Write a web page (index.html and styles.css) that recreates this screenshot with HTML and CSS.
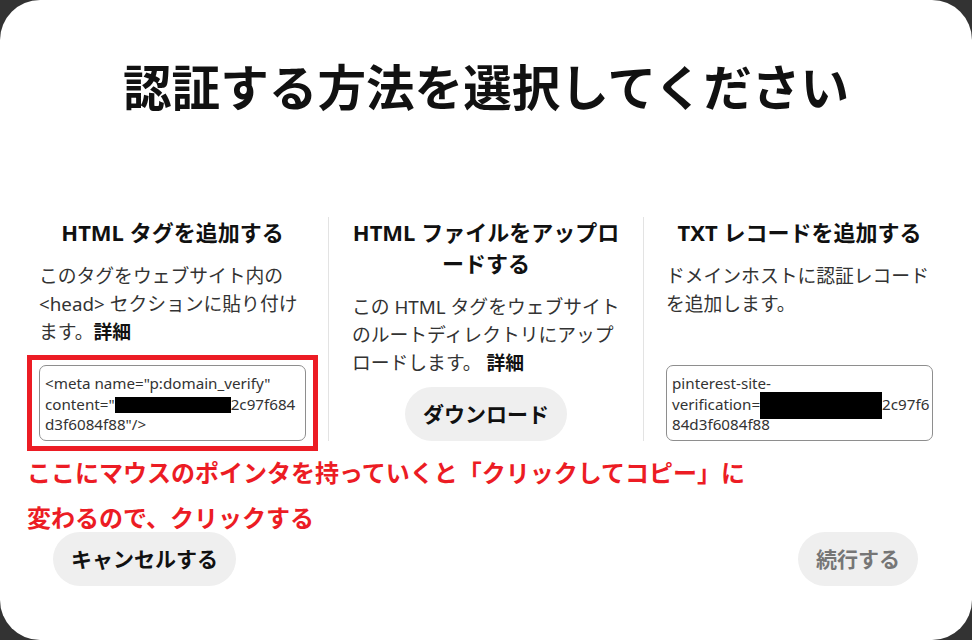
FILE: index.html
```html
<!DOCTYPE html>
<html lang="ja">
<head>
<meta charset="utf-8">
<title>認証する方法を選択してください</title>
<link rel="stylesheet" href="styles.css">
</head>
<body>
<div class="modal">
  <h1 class="title">認証する方法を選択してください</h1>
  <div class="methods">
    <section class="method m1">
      <h2 class="method-title">HTML タグを追加する</h2>
      <p class="method-desc">このタグをウェブサイト内の &lt;head&gt; セクションに貼り付けます。<b>詳細</b></p>
      <div class="code code1">&lt;meta name="p:domain_verify"<br>content="<span class="redact r1"></span>2c97f684<br>d3f6084f88"/&gt;</div>
    </section>
    <section class="method m2">
      <h2 class="method-title">HTML ファイルをアップロードする</h2>
      <p class="method-desc">この HTML タグをウェブサイトのルートディレクトリにアップロードします。 <b>詳細</b></p>
      <div class="action"><button class="btn">ダウンロード</button></div>
    </section>
    <section class="method m3">
      <h2 class="method-title">TXT レコードを追加する</h2>
      <p class="method-desc">ドメインホストに認証レコードを追加します。</p>
      <div class="code code3">pinterest-site-<br>verification=<span class="redact r3"></span>2c97f6<br>84d3f6084f88</div>
    </section>
  </div>
  <div class="footer">
    <button class="btn">キャンセルする</button>
    <button class="btn btn-disabled">続行する</button>
  </div>
  <div class="note-box"></div>
  <p class="note">ここにマウスのポインタを持っていくと「クリックしてコピー」に<br>変わるので、クリックする</p>
</div>
</body>
</html>
```

FILE: styles.css
```css
html, body {
  margin: 0;
  padding: 0;
  background: #333333;
}
body {
  font-family: "Noto Sans", "Noto Sans CJK JP", sans-serif;
  color: #111111;
}
.modal {
  position: relative;
  width: 972px;
  height: 640px;
  background: #ffffff;
  border-radius: 40px;
  display: flex;
  flex-direction: column;
  overflow: hidden;
}
.title {
  margin: 57px 0 0;
  font-size: 48.6px;
  line-height: 60px;
  font-weight: 700;
  text-align: center;
  color: #111111;
}
.methods {
  margin-top: 100px;
  padding-left: 17px;
  display: grid;
  grid-template-columns: 311px 315px 312px;
}
.method {
  display: flex;
  flex-direction: column;
  padding: 0 22px;
}
.m2 {
  border-left: 1px solid #e3e3e3;
  padding: 0 23px;
}
.m3 {
  border-left: 1px solid #e3e3e3;
  padding: 0 22px 0 22px;
}
.method-title {
  margin: 0;
  font-size: 22px;
  line-height: 31px;
  font-weight: 700;
  text-align: center;
  color: #111111;
}
.method-desc {
  margin: 14px 0 0;
  font-size: 18.8px;
  line-height: 28px;
  color: #333333;
}
.method-desc b {
  color: #111111;
  font-weight: 700;
}
.code {
  margin-top: auto;
  height: 76px;
  box-sizing: border-box;
  border: 1px solid #8e8e8e;
  border-radius: 7px;
  padding: 7px 5px 0;
  font-size: 15.2px;
  line-height: 20.5px;
  color: #333333;
  white-space: nowrap;
}
.redact {
  display: inline-block;
  background: #000000;
  vertical-align: middle;
}
.r1 {
  width: 116px;
  height: 16px;
}
.r3 {
  width: 122px;
  height: 27px;
  margin-top: -6px;
  margin-bottom: -6px;
}
.action {
  margin-top: auto;
  padding-top: 10px;
  display: flex;
  justify-content: center;
}
.btn {
  font-family: "Noto Sans", "Noto Sans CJK JP", sans-serif;
  height: 54px;
  padding: 0 18px;
  border: none;
  border-radius: 27px;
  background: #efefef;
  color: #111111;
  font-size: 21px;
  line-height: 30px;
  font-weight: 700;
}
.btn-disabled {
  color: #767676;
}
.footer {
  margin-top: auto;
  padding: 0 54px 54px 53px;
  display: flex;
  justify-content: space-between;
}
.note-box {
  position: absolute;
  left: 27px;
  top: 355px;
  width: 291px;
  height: 96px;
  box-sizing: border-box;
  border: 5px solid #ec1c24;
}
.note {
  position: absolute;
  left: 27px;
  top: 450px;
  margin: 0;
  font-size: 24px;
  line-height: 45px;
  font-weight: 700;
  color: #ec1c24;
  white-space: nowrap;
}
```
